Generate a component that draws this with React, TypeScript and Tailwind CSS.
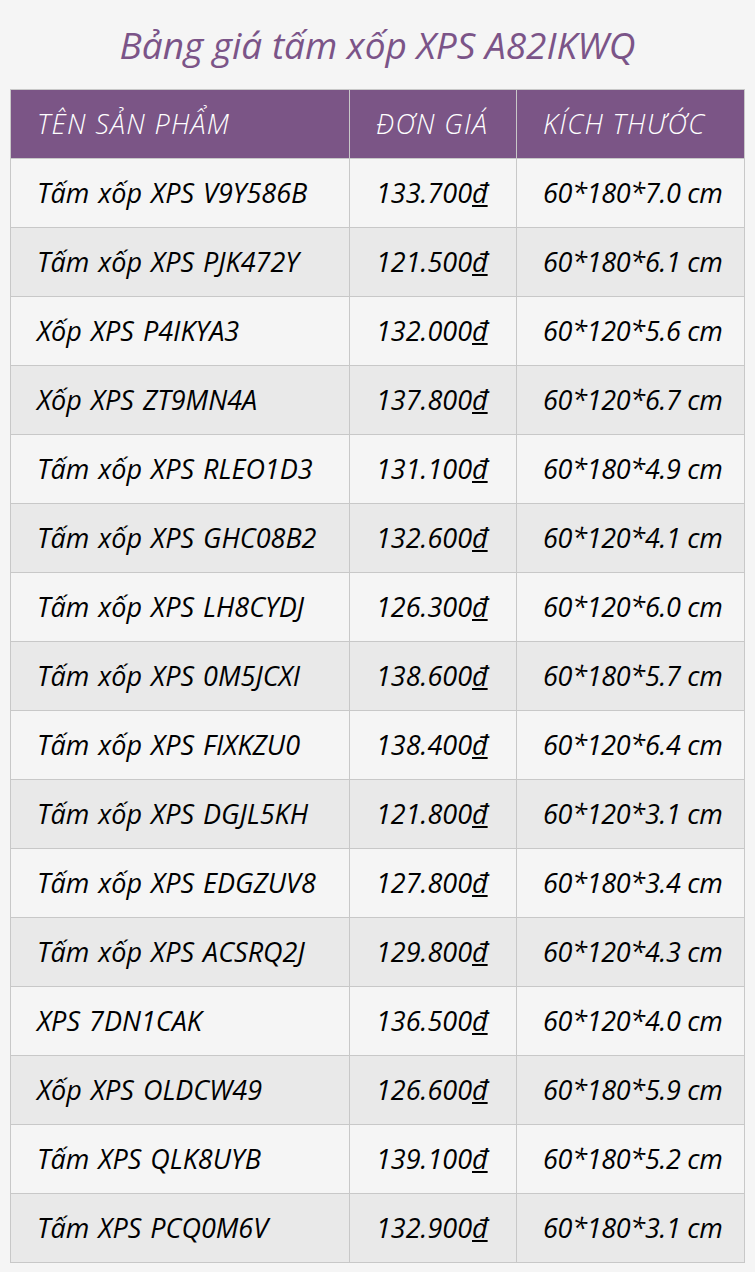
import React from "react";

const rows: [string, string, string][] = [
  ["Tấm xốp XPS V9Y586B", "133.700₫", "60*180*7.0 cm"],
  ["Tấm xốp XPS PJK472Y", "121.500₫", "60*180*6.1 cm"],
  ["Xốp XPS P4IKYA3", "132.000₫", "60*120*5.6 cm"],
  ["Xốp XPS ZT9MN4A", "137.800₫", "60*120*6.7 cm"],
  ["Tấm xốp XPS RLEO1D3", "131.100₫", "60*180*4.9 cm"],
  ["Tấm xốp XPS GHC08B2", "132.600₫", "60*120*4.1 cm"],
  ["Tấm xốp XPS LH8CYDJ", "126.300₫", "60*120*6.0 cm"],
  ["Tấm xốp XPS 0M5JCXI", "138.600₫", "60*180*5.7 cm"],
  ["Tấm xốp XPS FIXKZU0", "138.400₫", "60*120*6.4 cm"],
  ["Tấm xốp XPS DGJL5KH", "121.800₫", "60*120*3.1 cm"],
  ["Tấm xốp XPS EDGZUV8", "127.800₫", "60*180*3.4 cm"],
  ["Tấm xốp XPS ACSRQ2J", "129.800₫", "60*120*4.3 cm"],
  ["XPS 7DN1CAK", "136.500₫", "60*120*4.0 cm"],
  ["Xốp XPS OLDCW49", "126.600₫", "60*180*5.9 cm"],
  ["Tấm XPS QLK8UYB", "139.100₫", "60*180*5.2 cm"],
  ["Tấm XPS PCQ0M6V", "132.900₫", "60*180*3.1 cm"],
];

export default function App() {
  return (
    <div
      className="min-h-[1272px] w-[755px] bg-[#f5f5f5] italic"
      style={{ fontFamily: '"Open Sans", "Noto Sans", sans-serif' }}
    >
      <h1 className="pt-[20px] pb-[20px] text-center text-[37px] leading-[49px] font-normal text-[#7b5488]">
        Bảng giá tấm xốp XPS A82IKWQ
      </h1>
      <div className="px-[10px]">
        <table className="w-[734px] border-collapse table-fixed text-[27px] text-black">
          <colgroup>
            <col className="w-[339px]" />
            <col className="w-[167px]" />
            <col className="w-[228px]" />
          </colgroup>
          <thead>
            <tr className="h-[69px] bg-[#7b5586] text-white tracking-[1.3px]">
              <th className="border border-[#c8c8c8] pl-[26px] text-left font-light">TÊN SẢN PHẨM</th>
              <th className="border border-[#c8c8c8] pl-[26px] text-left font-light">ĐƠN GIÁ</th>
              <th className="border border-[#c8c8c8] pl-[26px] text-left font-light">KÍCH THƯỚC</th>
            </tr>
          </thead>
          <tbody>
            {rows.map((r, i) => (
              <tr key={i} className={`h-[69px] ${i % 2 === 0 ? "bg-[#f5f5f5]" : "bg-[#e9e9e9]"}`}>
                <td className="border border-[#c8c8c8] pl-[26px] [word-spacing:2px]">{r[0]}</td>
                <td className="border border-[#c8c8c8] pl-[26px]">
                  {r[1].slice(0, -1)}
                  <span className="underline">đ</span>
                </td>
                <td className="border border-[#c8c8c8] pl-[26px] tracking-[-0.3px]">{r[2]}</td>
              </tr>
            ))}
          </tbody>
        </table>
      </div>
    </div>
  );
}
